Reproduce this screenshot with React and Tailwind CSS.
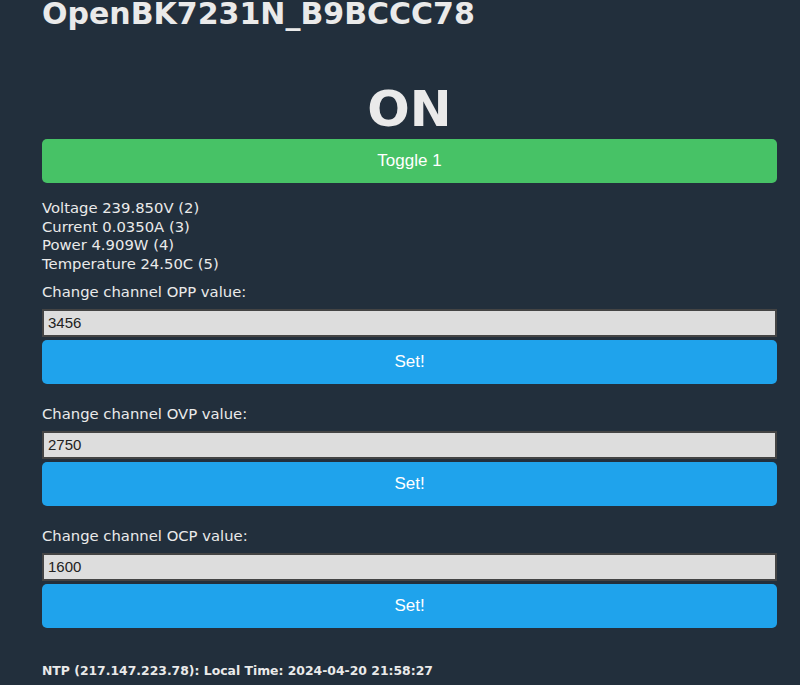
import React, { useState } from 'react'

const verdana = { fontFamily: '"DejaVu Sans", Verdana, sans-serif' }

const channels = [
  { label: 'OPP', value: '3456' },
  { label: 'OVP', value: '2750' },
  { label: 'OCP', value: '1600' },
]

const readings = [
  'Voltage 239.850V (2)',
  'Current 0.0350A (3)',
  'Power 4.909W (4)',
  'Temperature 24.50C (5)',
]

const ChannelForm = ({ label, initial }) => {
  const [value, setValue] = useState(initial)
  return (
    <div className="flex flex-col">
      <div className="text-[14.8px] leading-[20px] text-[#eaeaea]" style={verdana}>
        Change channel {label} value:
      </div>
      <input
        value={value}
        onChange={(e) => setValue(e.target.value)}
        className="mt-[7px] h-[28px] w-full border-2 border-[#444] bg-[#dddddd] px-[4px] font-['Liberation_Sans',Arial,sans-serif] text-[15px] text-[#222] outline-none"
      />
      <button className="mt-[3px] h-[44px] w-full rounded-[5px] bg-[#1fa3ec] font-['Liberation_Sans',Arial,sans-serif] text-[17px] text-white">
        Set!
      </button>
    </div>
  )
}

const App = () => {
  const [on, setOn] = useState(true)

  return (
    <div className="min-h-[685px] w-full overflow-hidden bg-[#222f3c] text-[#eaeaea]">
      <div className="ml-[42px] flex w-[735px] flex-col">
        <h1 className="mt-[-4px] text-[30px] font-bold leading-[36px] text-[#eaeaea]" style={verdana}>
          OpenBK7231N_B9BCCC78
        </h1>

        <div className="mt-[48px] text-center text-[50px] font-bold leading-[58px] text-[#eaeaea]" style={verdana}>
          {on ? 'ON' : 'OFF'}
        </div>

        <button
          onClick={() => setOn(!on)}
          className="mt-[1px] h-[44px] w-full rounded-[5px] bg-[#47c266] font-['Liberation_Sans',Arial,sans-serif] text-[17px] text-white"
        >
          Toggle 1
        </button>

        <div className="mt-[16px] flex flex-col text-[14.8px] leading-[18.7px]" style={verdana}>
          {readings.map((r) => (
            <div key={r}>{r}</div>
          ))}
        </div>

        <div className="mt-[8px] flex flex-col gap-[20px]">
          {channels.map((c) => (
            <ChannelForm key={c.label} label={c.label} initial={c.value} />
          ))}
        </div>

        <div className="mt-[34px] text-[12.4px] font-bold leading-[18px] text-[#eaeaea]" style={verdana}>
          NTP (217.147.223.78): Local Time: 2024-04-20 21:58:27
        </div>
      </div>
    </div>
  )
}

export default App
